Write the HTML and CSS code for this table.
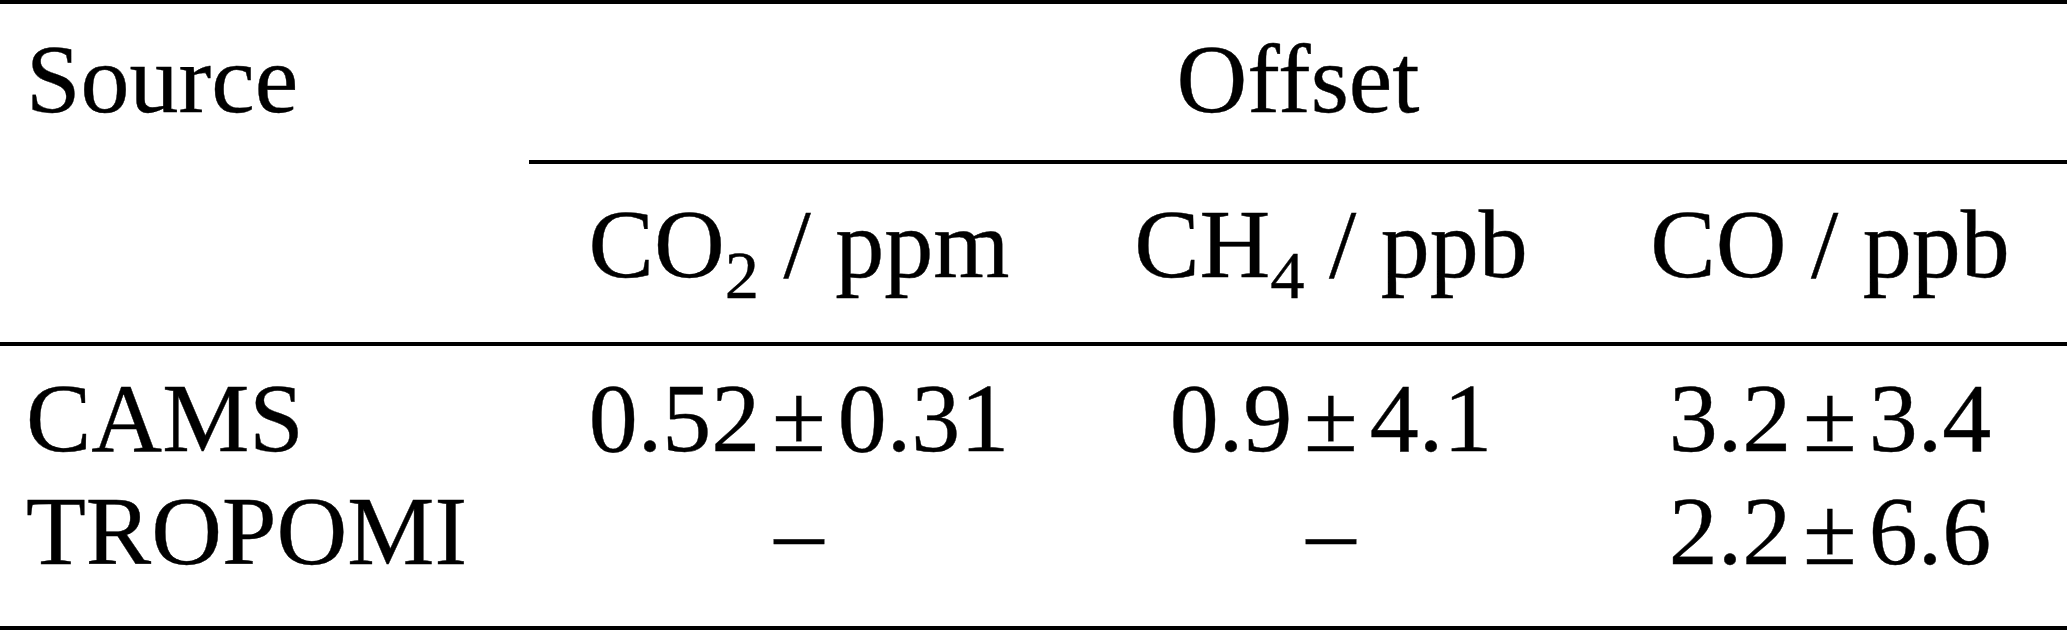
FILE: index.html
```html
<!DOCTYPE html>
<html lang="en">
<head>
    <meta charset="UTF-8">
    <title>Offset table</title>
    <link rel="stylesheet" href="styles.css">
</head>
<body>
    <div class="table">
        <div class="row head-top">
            <div class="cell first">Source</div>
            <div class="cell span">Offset</div>
        </div>
        <div class="cmidrule"></div>
        <div class="row head-units">
            <div class="cell first"></div>
            <div class="cell">CO<sub>2</sub> / ppm</div>
            <div class="cell">CH<sub>4</sub> / ppb</div>
            <div class="cell">CO / ppb</div>
        </div>
        <div class="body">
            <div class="row">
                <div class="cell first">CAMS</div>
                <div class="cell">0.52<span class="pm">±</span>0.31</div>
                <div class="cell">0.9<span class="pm">±</span>4.1</div>
                <div class="cell">3.2<span class="pm">±</span>3.4</div>
            </div>
            <div class="row">
                <div class="cell first">TROPOMI</div>
                <div class="cell dash">–</div>
                <div class="cell dash">–</div>
                <div class="cell">2.2<span class="pm">±</span>6.6</div>
            </div>
        </div>
    </div>
</body>
</html>
```

FILE: styles.css
```css
body {
    margin: 0;
    background-color: white;
    font-family: "Liberation Serif", "Times New Roman", serif;
    font-size: 98px;
    color: black;
    -webkit-text-stroke: 0.4px black;
}
.table {
    width: 2067px;
    border-top: 4px solid black;
    border-bottom: 4px solid black;
}
.row {
    display: grid;
    grid-template-columns: 529px 540px 524px 1fr;
    white-space: nowrap;
}
.cell {
    text-align: center;
}
.cell.first {
    text-align: left;
    padding-left: 26px;
}
.cell.span {
    grid-column: 2 / 5;
}
.head-top {
    height: 156px;
    padding-top: 28px;
    box-sizing: border-box;
    line-height: 94px;
}
.cmidrule {
    margin-left: 529px;
    height: 4px;
    background-color: black;
}
.head-units {
    height: 182px;
    padding-top: 33px;
    box-sizing: border-box;
    line-height: 94px;
    border-bottom: 4px solid black;
}
sub {
    font-size: 0.7em;
    vertical-align: -0.3em;
    line-height: 0;
}
.body {
    height: 280px;
    padding-top: 16px;
    box-sizing: border-box;
    line-height: 113px;
}
.pm {
    margin: 0 0.12em;
}
```
